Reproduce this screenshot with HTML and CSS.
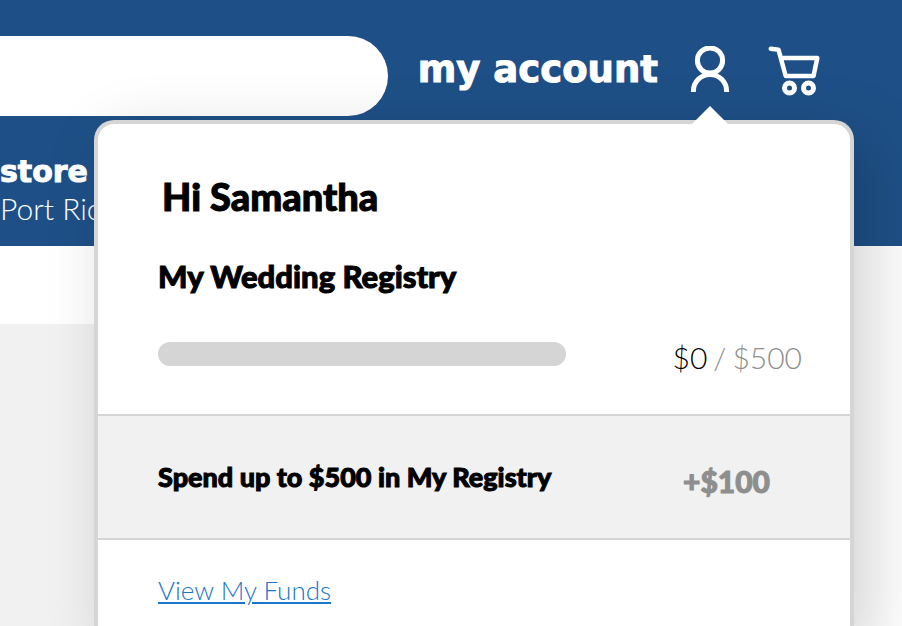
FILE: index.html
```html
<!DOCTYPE html>
<html lang="en">
<head>
<meta charset="utf-8">
<meta name="viewport" content="width=device-width, initial-scale=1">
<title>My Account</title>
<link rel="stylesheet" href="styles.css">
</head>
<body>
<div class="page">
  <header class="header">
    <div class="topbar">
      <input class="search" type="search" aria-label="Search">
      <a class="account-link" href="#">
        <span>my account</span>
        <svg class="icon-user" viewBox="0 0 40 48" width="40" height="48" aria-hidden="true">
          <circle cx="20" cy="14.500" r="12.600"/>
          <path d="M3.400 46v-1a16.600 16.600 0 0 1 33.200 0V46"/>
        </svg>
      </a>
      <a class="cart-link" href="#" aria-label="Cart">
        <svg class="icon-cart" viewBox="0 0 52 52" width="52" height="52" aria-hidden="true">
          <path d="M2.800 4.800 10.500 5.700 17.700 32H45.500L49.300 14H13.800"/>
          <circle class="wheel" cx="21.500" cy="44" r="5"/>
          <circle class="wheel" cx="40.500" cy="44" r="5"/>
        </svg>
      </a>
    </div>
    <div class="store">
      <span class="store-label">store</span>
      <span class="store-name">Port Ric</span>
    </div>
  </header>
  <main class="content"></main>

  <section class="panel">
    <div class="summary">
      <h1 class="greeting">Hi Samantha</h1>
      <h2 class="registry-title">My Wedding Registry</h2>
      <div class="progress-row">
        <div class="progress" role="progressbar" aria-label="Registry progress" aria-valuemin="0" aria-valuemax="500" aria-valuenow="0"></div>
        <div class="amount"><span>$0</span><span class="goal">/</span><span class="goal">$500</span></div>
      </div>
    </div>
    <div class="offer">
      <span class="offer-text">Spend up to $500 in My Registry</span>
      <span class="offer-bonus">+$100</span>
    </div>
    <div class="funds">
      <a class="funds-link" href="#">View My Funds</a>
    </div>
  </section>
</div>
</body>
</html>
```

FILE: styles.css
```css
* {
  box-sizing: border-box;
}

body {
  margin: 0;
  background: #fff;
  color: #000;
  font-family: Lato, "Liberation Sans", sans-serif;
}

.page {
  position: relative;
  display: flex;
  flex-direction: column;
  height: 100vh;
  overflow: hidden;
}

.header {
  padding: 36px 82px 16px 0;
  background: #1e5087;
  color: #fff;
}

.topbar {
  display: flex;
  align-items: center;
}

.search {
  flex: 1;
  min-width: 0;
  height: 80px;
  margin: 0;
  padding: 0 40px 0 24px;
  border: 0;
  border-radius: 0 40px 40px 0;
  background: #fff;
  font: 300 28px/40px Lato, sans-serif;
  appearance: none;
  outline: none;
}

.account-link,
.cart-link {
  display: flex;
  align-items: center;
  color: inherit;
  text-decoration: none;
  padding-bottom: 12px;
}

.account-link {
  gap: 32px;
  margin-left: 30px;
  font: 700 37px/40px "DejaVu Sans", sans-serif;
  white-space: nowrap;
}

.account-link,
.store-label,
.greeting,
.registry-title,
.offer {
  -webkit-text-stroke: 1px currentColor;
}

.cart-link {
  margin-left: 38px;
}

.icon-user,
.icon-cart {
  fill: none;
  stroke: #fff;
  stroke-width: 5;
}

.icon-cart {
  stroke-width: 4.5;
  stroke-linecap: round;
  stroke-linejoin: round;
}

.wheel {
  stroke-width: 5;
}

.store {
  display: flex;
  flex-direction: column;
  padding-top: 38px;
}

.store-label {
  font: 700 30px/36px "DejaVu Sans", sans-serif;
}

.store-name {
  font-size: 30px;
  font-weight: 300;
  line-height: 36px;
  padding-bottom: 4px;
}

.content {
  flex: 1;
  margin: 78px 80px 0 0;
  background: #f1f1f1;
}

.panel {
  position: absolute;
  top: 120px;
  right: 48px;
  left: 94px;
  border: 4px solid #d5d5d5;
  border-bottom: 0;
  border-radius: 20px 20px 0 0;
  background: #fff;
  box-shadow: 16px 16px 64px rgba(0, 0, 0, 0.18);
}

.panel::before {
  content: "";
  position: absolute;
  top: -18px;
  right: 122px;
  border: 18px solid transparent;
  border-top: 0;
  border-bottom-color: #fff;
}

.summary {
  padding: 48px 48px 32px 60px;
}

.greeting {
  margin: 0;
  padding-left: 4px;
  font-size: 38px;
  font-weight: 900;
  line-height: 48px;
}

.registry-title {
  margin: 32px 0 0;
  font-size: 31px;
  font-weight: 900;
  line-height: 48px;
}

.progress-row {
  display: flex;
  align-items: flex-start;
  justify-content: space-between;
  padding-top: 42px;
}

.progress {
  flex: 0 1 408px;
  height: 24px;
  border-radius: 12px;
  background: #d5d5d5;
}

.amount {
  display: flex;
  gap: 6px;
  font-size: 30px;
  font-weight: 300;
  line-height: 30px;
  padding-bottom: 10px;
}

.goal {
  color: #8e8e8e;
}

.offer {
  display: flex;
  align-items: flex-end;
  justify-content: space-between;
  padding: 37px 80px 37px 60px;
  border: solid #d5d5d5;
  border-width: 2px 0;
  background: #f1f1f1;
  font-size: 27px;
  font-weight: 900;
  line-height: 48px;
}

.offer-bonus {
  color: #8e8e8e;
  font-size: 30px;
  line-height: 40px;
}

.funds {
  padding: 30px 60px;
}

.funds-link {
  color: #1b76c9;
  font-size: 26px;
  font-weight: 300;
  line-height: 40px;
}
```
